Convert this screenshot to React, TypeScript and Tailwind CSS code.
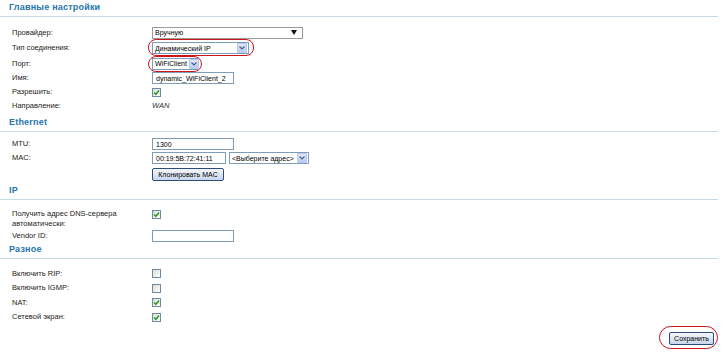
import React from "react";

const font = { fontFamily: '"Liberation Sans", Arial, sans-serif' };

function SectionTitle({ title, h }: { title: string; h: string }) {
  return (
    <div className={`${h} flex items-end pb-[4px] pl-[9px] w-[718px] border-b border-[#c6dbe8]`}>
      <span className="text-[9px] font-bold leading-none text-[#2675ad] tracking-[0.2px]">{title}</span>
    </div>
  );
}

function Row({ label, h, children }: { label: React.ReactNode; h: string; children?: React.ReactNode }) {
  return (
    <div className={`${h} flex items-center`}>
      <div className="w-[152px] pl-[12px] text-[7.5px] leading-[10px] text-[#222]">{label}</div>
      <div className="flex items-center gap-[3px]">{children}</div>
    </div>
  );
}

function Checkbox({ checked }: { checked?: boolean }) {
  return (
    <div className="w-[9px] h-[9px] border border-[#6e8aa8] bg-gradient-to-br from-[#dcdcd6] to-white flex items-center justify-center">
      {checked && (
        <svg width="7" height="7" viewBox="0 0 7 7">
          <path d="M1 3.5 L2.8 5.3 L6 1.5" stroke="#21a121" strokeWidth="1.5" fill="none" />
        </svg>
      )}
    </div>
  );
}

function XpArrow() {
  return (
    <div className="w-[10px] h-[10px] shrink-0 rounded-[1px] border border-[#b3c6ee] bg-gradient-to-b from-[#e0e8fb] to-[#b9cdf6] flex items-center justify-center">
      <svg width="6" height="4" viewBox="0 0 6 4">
        <path d="M0.5 0.5 L3 3 L5.5 0.5" stroke="#4d6185" strokeWidth="1.2" fill="none" />
      </svg>
    </div>
  );
}

function XpSelect({ w, text }: { w: string; text: string }) {
  return (
    <div className={`${w} h-[12px] border border-[#7f9db9] bg-white flex items-center justify-between gap-[2px] pl-[2px] pr-px text-[7px] text-black`}>
      <span className="leading-none whitespace-nowrap">{text}</span>
      <XpArrow />
    </div>
  );
}

function Input({ w, value }: { w: string; value?: string }) {
  return (
    <div className={`${w} h-[12px] border border-[#7f9db9] bg-white flex items-center px-[3px] text-[7px] text-black leading-none whitespace-nowrap overflow-hidden`}>
      {value}
    </div>
  );
}

function XpButton({ text, w }: { text: string; w: string }) {
  return (
    <div className={`${w} h-[13px] rounded-[2px] border border-[#2a4d7a] bg-gradient-to-b from-[#f4f6fb] to-[#c9d6ea] flex items-center justify-center text-[7px] text-black leading-none whitespace-nowrap`}>
      {text}
    </div>
  );
}

function Oval({ className }: { className: string }) {
  return <div className={`absolute border-[1.5px] border-[#d0121b] rounded-[8px] ${className}`} />;
}

export default function App() {
  return (
    <div className="w-[726px] h-[354px] bg-white overflow-hidden" style={font}>
      <SectionTitle title="Главные настройки" h="h-[17px]" />
      <div className="h-[8px]" />
      <Row label="Провайдер:" h="h-[15px]">
        <div className="w-[151px] h-[12px] border border-[#9a9a9a] bg-white flex items-center justify-between pl-[2px] pr-[5px] text-[7px] leading-none">
          <span>Вручную</span>
          <svg width="6" height="5" viewBox="0 0 6 5">
            <path d="M0 0 H6 L3 5 Z" fill="#111" />
          </svg>
        </div>
      </Row>
      <Row label="Тип соединения:" h="h-[16px]">
        <div className="relative">
          <XpSelect w="w-[97px]" text="Динамический IP" />
          <Oval className="-left-[4px] -top-[3px] w-[106px] h-[17px]" />
        </div>
      </Row>
      <Row label="Порт:" h="h-[15px]">
        <div className="relative">
          <XpSelect w="w-[46px]" text="WiFiClient" />
          <Oval className="-left-[4px] -top-[2px] w-[54px] h-[16px]" />
        </div>
      </Row>
      <Row label="Имя:" h="h-[14px]">
        <Input w="w-[82px]" value="dynamic_WiFiClient_2" />
      </Row>
      <Row label="Разрешить:" h="h-[14px]">
        <Checkbox checked />
      </Row>
      <Row label="Направление:" h="h-[14px]">
        <span className="text-[7.5px] italic text-[#333] leading-none">WAN</span>
      </Row>

      <SectionTitle title="Ethernet" h="h-[19px]" />
      <div className="h-[5px]" />
      <Row label="MTU:" h="h-[14px]">
        <Input w="w-[82px]" value="1300" />
      </Row>
      <Row label="MAC:" h="h-[14px]">
        <Input w="w-[74px]" value="00:19:5B:72:41:11" />
        <XpSelect w="w-[80px]" text="<Выберите адрес>" />
      </Row>
      <Row label="" h="h-[19px]">
        <XpButton text="Клонировать MAC" w="w-[72px]" />
      </Row>

      <SectionTitle title="IP" h="h-[16px]" />
      <div className="h-[8px]" />
      <div className="h-[21px] flex items-start">
        <div className="w-[152px] pl-[12px] pt-px text-[7.5px] leading-[10px] text-[#222]">
          Получить адрес DNS-сервера
          <br />
          автоматически:
        </div>
        <div className="pt-[2px]">
          <Checkbox checked />
        </div>
      </div>
      <Row label="Vendor ID:" h="h-[13px]">
        <Input w="w-[82px]" />
      </Row>

      <SectionTitle title="Разное" h="h-[17px]" />
      <div className="h-[7px]" />
      <Row label="Включить RIP:" h="h-[15px]">
        <Checkbox />
      </Row>
      <Row label="Включить IGMP:" h="h-[14px]">
        <Checkbox />
      </Row>
      <Row label="NAT:" h="h-[15px]">
        <Checkbox checked />
      </Row>
      <Row label="Сетевой экран:" h="h-[14px]">
        <Checkbox checked />
      </Row>

      <div className="h-[8px]" />
      <div className="flex justify-end pr-[12px]">
        <div className="relative">
          <XpButton text="Сохранить" w="w-[45px]" />
          <Oval className="-left-[10px] -top-[6px] w-[59px] h-[23px] rounded-[12px]" />
        </div>
      </div>
    </div>
  );
}
